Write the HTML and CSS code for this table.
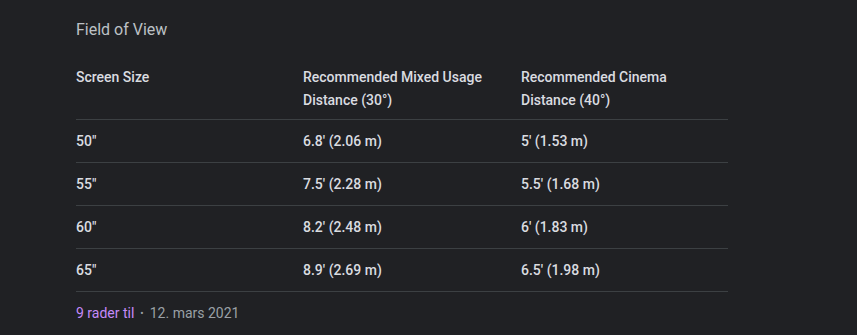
FILE: index.html
```html
<!DOCTYPE html>
<html>
<head>
<meta charset="utf-8">
<link rel="stylesheet" href="styles.css">
</head>
<body>
<div class="wrap">
  <div class="title">Field of View</div>
  <table class="tbl">
    <colgroup>
      <col class="c1"><col class="c2"><col class="c3">
    </colgroup>
    <thead>
      <tr><th>Screen Size</th><th>Recommended Mixed Usage Distance (30°)</th><th>Recommended Cinema Distance (40°)</th></tr>
    </thead>
    <tbody>
      <tr><td>50"</td><td>6.8' (2.06 m)</td><td>5' (1.53 m)</td></tr>
      <tr><td>55"</td><td>7.5' (2.28 m)</td><td>5.5' (1.68 m)</td></tr>
      <tr><td>60"</td><td>8.2' (2.48 m)</td><td>6' (1.83 m)</td></tr>
      <tr><td>65"</td><td>8.9' (2.69 m)</td><td>6.5' (1.98 m)</td></tr>
    </tbody>
  </table>
  <div class="foot"><span class="more">9 rader til</span><span class="dot">•</span><span class="date">12. mars 2021</span></div>
</div>
</body>
</html>
```
FILE: styles.css
```css
html, body {
  margin: 0;
  background: #202124;
}
body {
  font-family: Roboto, "Open Sans", sans-serif;
  color: #bdc1c6;
}
.wrap {
  padding: 20px 0 0 76px;
  width: 652px;
}
.title {
  font-size: 16px;
  line-height: 20px;
  color: #bdc1c6;
}
.tbl {
  margin-top: 26px;
  width: 652px;
  border-collapse: collapse;
  table-layout: fixed;
  font-size: 14px;
}
.c1 { width: 227px; }
.c2 { width: 218px; }
.c3 { width: 207px; }
.tbl th {
  text-align: left;
  vertical-align: top;
  font-weight: 500;
  line-height: 23px;
  padding: 0 16px 7px 0;
  color: #dadce0;
  border-bottom: 1px solid #3c4043;
}
.tbl td {
  font-weight: 500;
  line-height: 22px;
  padding: 10px 16px 10px 0;
  color: #dadce0;
  border-bottom: 1px solid #3c4043;
}
.foot {
  margin-top: 11px;
  font-size: 14px;
  line-height: 20px;
}
.more { color: #c58af9; }
.dot { color: #9aa0a6; margin: 0 6px; font-size: 10px; vertical-align: 1px; }
.date { color: #9aa0a6; }
```
